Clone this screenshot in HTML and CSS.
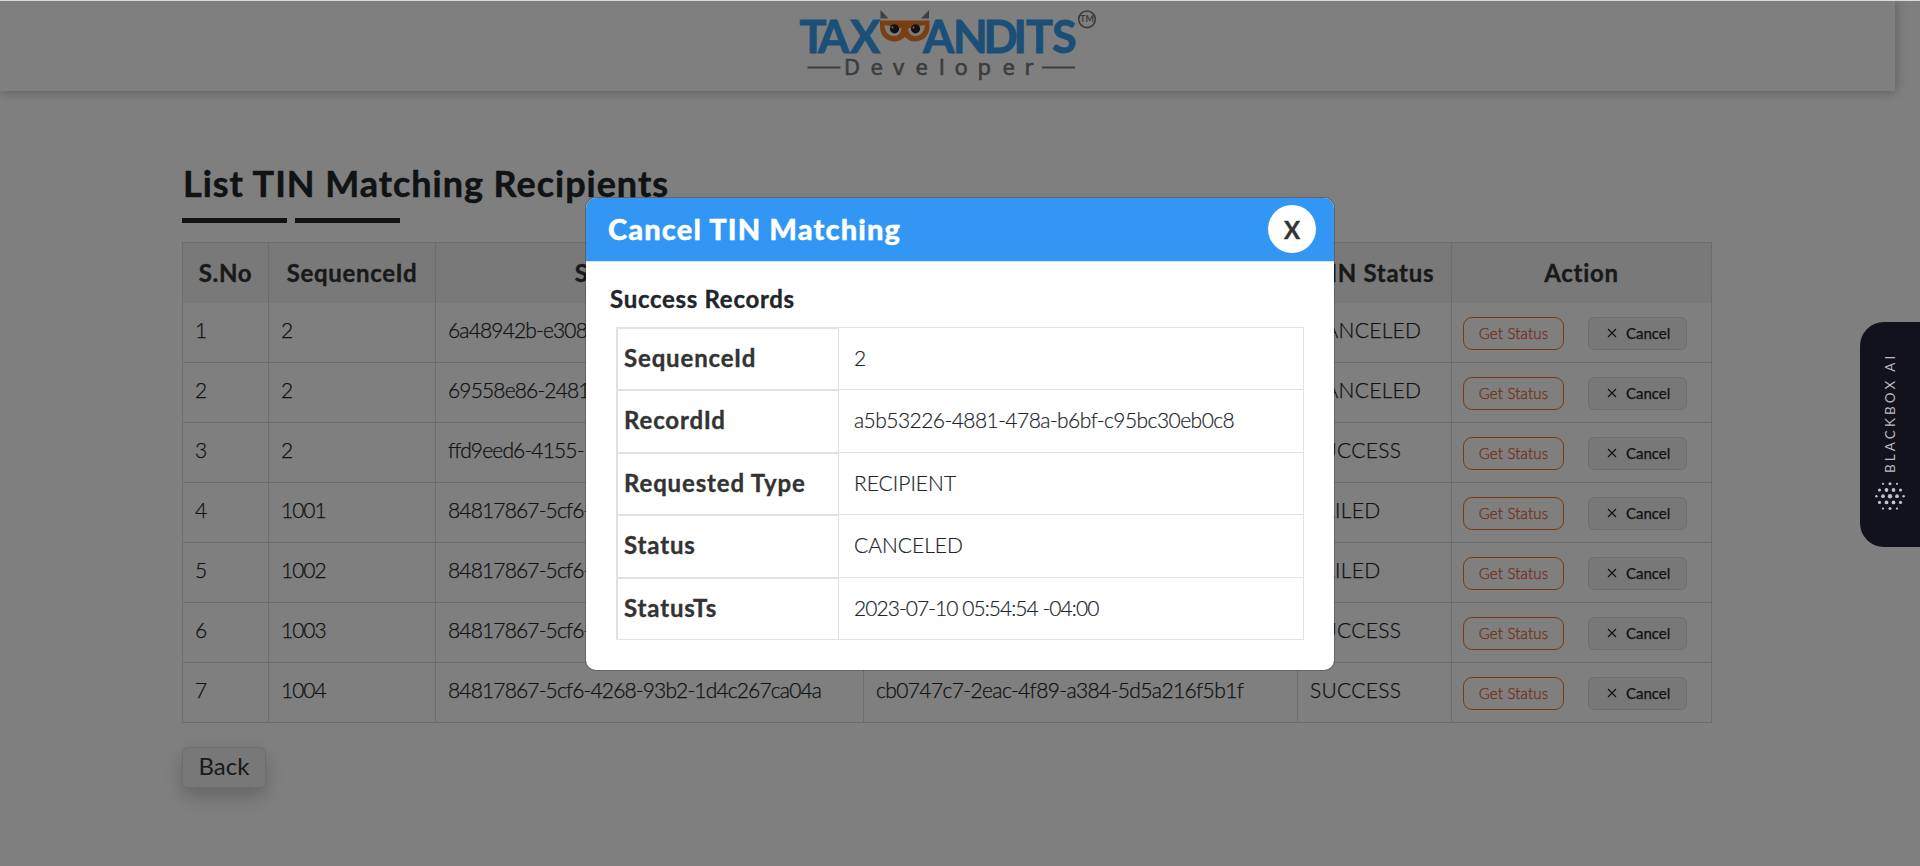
FILE: index.html
```
<!DOCTYPE html>
<html lang="en">
<head>
<meta charset="utf-8">
<title>List TIN Matching Recipients</title>
<link rel="stylesheet" href="styles.css">
</head>
<body>
<header class="topbar">
  <svg class="logo" width="310" height="80" viewBox="795 4 310 80" role="img" aria-label="TaxBandits Developer">
    <g class="logo-word">
      <text y="53" x="799.5 818 850">TAX</text>
      <text y="53" x="923 953 983.5 1013.5 1026 1052">ANDITS</text>
    </g>
    <path fill="#7c8082" d="M880.500 10L888.500 18.500H880.500zM929 10V18.500H921z"/>
    <path fill="#f77c26" d="M880 20.500H929.500V27C929.500 36 922.500 41.500 915 41.500C911 41.500 907.500 39.700 904.800 37C902 39.700 898.500 41.500 894.500 41.500C887 41.500 880 36 880 27z"/>
    <path fill="#f4f6f8" d="M884.500 25L901.500 28.500C901 33.500 898.200 36 894 36C888.500 36 884.500 31.500 884.500 25zM924.800 25L908 28.500C908.500 33.500 911.200 36 915.500 36C921 36 924.800 31.500 924.800 25z"/>
    <circle cx="894.500" cy="28.800" r="4.600" fill="#222"/><circle cx="915.500" cy="28.800" r="4.600" fill="#222"/>
    <circle cx="892.500" cy="27.500" r="1" fill="#ddd"/><circle cx="913.500" cy="27.500" r="1" fill="#ddd"/>
    <circle cx="1087" cy="19.300" r="8.300" fill="none" stroke="#777" stroke-width="1.600"/>
    <text class="logo-tm" x="1087" y="22.400">TM</text>
    <path stroke="#777c7c" stroke-width="2" d="M807.500 67.500H840.500M1042 67.500H1075"/>
    <text class="logo-sub" y="75" x="844 870.500 893 915.500 939 954.500 977.500 1002.500 1024.500">Developer</text>
  </svg>
</header>

<main class="page">
  <h1 class="title">List TIN Matching Recipients</h1>
  <div class="rule"><span></span><span></span></div>
  <div class="grid" id="grid">
    <div class="th">S.No</div><div class="th">SequenceId</div><div class="th">SubmissionId</div><div class="th">RecordId</div><div class="th">TIN Status</div><div class="th">Action</div>
  </div>
  <button class="back">Back</button>
</main>

<div class="backdrop"></div>
<div class="edge"></div>

<section class="modal">
  <div class="modal-head">
    <h2>Cancel TIN Matching</h2>
    <button class="close">X</button>
  </div>
  <div class="modal-body">
    <h3>Success Records</h3>
    <dl class="details">
      <dt>SequenceId</dt><dd>2</dd>
      <dt>RecordId</dt><dd class="uuid">a5b53226-4881-478a-b6bf-c95bc30eb0c8</dd>
      <dt>Requested Type</dt><dd>RECIPIENT</dd>
      <dt>Status</dt><dd>CANCELED</dd>
      <dt>StatusTs</dt><dd class="stamp">2023-07-10 05:54:54 -04:00</dd>
    </dl>
  </div>
</section>

<aside class="blackbox">
  <span>BLACKBOX AI</span>
  <svg width="32" height="30" viewBox="0 0 32 30" fill="#c2c2c6">
    <g><circle cx="9" cy="2.800" r="1.100"/><circle cx="16" cy="2.800" r="1.500"/><circle cx="23" cy="2.800" r="1.100"/>
    <circle cx="5.500" cy="9" r="1.600"/><circle cx="12.500" cy="9" r="1.900"/><circle cx="19.500" cy="9" r="1.900"/><circle cx="26.500" cy="9" r="1.600"/>
    <circle cx="2.400" cy="15.200" r="1.200"/><circle cx="9" cy="15.200" r="1.900"/><circle cx="16" cy="15.200" r="2.200"/><circle cx="23" cy="15.200" r="1.900"/><circle cx="29.600" cy="15.200" r="1.200"/>
    <circle cx="5.500" cy="21.400" r="1.600"/><circle cx="12.500" cy="21.400" r="1.900"/><circle cx="19.500" cy="21.400" r="1.900"/><circle cx="26.500" cy="21.400" r="1.600"/>
    <circle cx="9" cy="27.600" r="1.100"/><circle cx="16" cy="27.600" r="1.500"/><circle cx="23" cy="27.600" r="1.100"/></g>
  </svg>
</aside>
<script src="rows.js"></script>
</body>
</html>
```
FILE: styles.css
```
* { box-sizing: border-box; }
body {
  margin: 0;
  height: 866px;
  overflow: hidden;
  background: #fff;
  color: #212529;
  font-family: Lato, "Liberation Sans", sans-serif;
}
h1, h2, h3, dl, dd { margin: 0; }
button { font-family: inherit; padding: 0; }

.topbar {
  width: 1895px;
  height: 91px;
  padding: 4px 0 0 795px;
  background: #fff;
  box-shadow: 0 0 12px rgba(0, 0, 0, .32);
}
.logo { display: block; }
.logo-word { font: 700 45px Lato, sans-serif; fill: #369fee; stroke: #369fee; stroke-width: .9; }
.logo-sub { font: 400 22px "Noto Sans", sans-serif; fill: #777c7c; stroke: #777c7c; stroke-width: .6; }
.logo-tm { font: 700 9px Lato, sans-serif; fill: #777; text-anchor: middle; }

.page { padding: 70px 0 0 182px; }
.title {
  height: 45px;
  padding-left: 1px;
  font-size: 36px;
  line-height: 45px;
  font-weight: 700;
  letter-spacing: .97px;
  white-space: nowrap;
  -webkit-text-stroke: .5px;
}
.rule { display: flex; gap: 8px; margin-top: 12px; }
.rule span { width: 105px; height: 5px; background: #212529; }

.grid {
  display: grid;
  grid-template-columns: 86px 167px 428px 434px 154px 260px;
  width: 1530px;
  margin-top: 19px;
  border: solid #d8dadc;
  border-width: 1px 0 0 1px;
}
.th {
  height: 60px;
  line-height: 59px;
  border-right: 1px solid #d8dadc;
  background: #f3f3f3;
  color: #333;
  font-size: 24px;
  font-weight: 700;
  letter-spacing: .7px;
  text-align: center;
  -webkit-text-stroke: .35px;
}
.td {
  height: 60px;
  padding-left: 12px;
  border: solid #d8dadc;
  border-width: 0 1px 1px 0;
  font-size: 21px;
  font-weight: 300;
  line-height: 54px;
  white-space: nowrap;
  overflow: hidden;
  -webkit-text-stroke: .25px;
}
.num { letter-spacing: -1px; }
.uuid { letter-spacing: -.85px; }
.rec { letter-spacing: -.62px; }
.state { letter-spacing: .3px; }
.actions { display: flex; align-items: flex-start; gap: 24px; padding: 14px 0 0 11px; }
.status-btn, .cancel-btn {
  height: 33px;
  background: #fff;
  font-size: 15px;
}
.status-btn {
  width: 101px;
  padding-bottom: 2px;
  border: 1px solid #f37421;
  border-radius: 9px;
  color: #e86a38;
  font-weight: 300;
  letter-spacing: .2px;
  -webkit-text-stroke: .35px;
}
.cancel-btn {
  display: flex;
  align-items: center;
  gap: 9px;
  width: 99px;
  padding: 0 0 2px 18px;
  border: 1px solid #dcdcdc;
  border-radius: 6px;
  background: #f0f0f0;
  color: #212529;
}
.back {
  width: 84px;
  height: 41px;
  margin-top: 24px;
  padding-bottom: 4px;
  border: 1px solid #dcdcdc;
  border-radius: 6px;
  background: #f0f0f0;
  box-shadow: 0 8px 20px rgba(0, 0, 0, .22);
  color: #333;
  font-size: 24px;
}

.backdrop { position: absolute; inset: 0; background: rgba(0, 0, 0, .5); }
.edge { position: absolute; inset: 0 0 auto; height: 1px; background: #dadddc; }

.modal {
  position: absolute;
  left: 586px;
  top: 198px;
  width: 748px;
  height: 472px;
  border-radius: 10px;
  background: #fff;
  box-shadow: 0 0 0 1px rgba(0, 0, 0, .2);
}
.modal-head {
  display: flex;
  justify-content: space-between;
  height: 64px;
  padding: 7px 18px 0 22px;
  border-bottom: 1px solid #dee2e6;
  border-radius: 10px 10px 0 0;
  background: #3297f4;
}
.modal-head h2 {
  color: #fff;
  font-size: 29px;
  line-height: 47px;
  font-weight: 900;
  letter-spacing: 1.15px;
  -webkit-text-stroke: .4px;
}
.close {
  width: 48px;
  height: 48px;
  border: 0;
  border-radius: 50%;
  background: #fff;
  color: #333;
  font-size: 24px;
  font-weight: 700;
  -webkit-text-stroke: .4px;
}
.modal-body { padding: 20px 30px 0 25px; }
.modal-body h3 {
  height: 40px;
  margin-left: -1px;
  font-size: 24px;
  line-height: 33px;
  font-weight: 700;
  letter-spacing: .7px;
  -webkit-text-stroke: .35px;
}
.details {
  display: grid;
  grid-template-columns: 223px 465px;
  grid-template-rows: 62px 63px 62px 63px 62px;
  margin: 5px 0 0 5px;
  border-bottom: 1px solid #dee2e6;
}
.details dt {
  padding-left: 6px;
  border: solid #dee2e6;
  border-width: 2px 1px 0 2px;
  color: #333;
  font-size: 24px;
  line-height: 58px;
  font-weight: 700;
  letter-spacing: .85px;
  -webkit-text-stroke: .35px;
}
.details dd {
  padding-left: 15px;
  border: solid #dee2e6;
  border-width: 1px 1px 0 0;
  font-size: 21px;
  line-height: 59px;
  font-weight: 300;
  -webkit-text-stroke: .2px;
}
.details .uuid { letter-spacing: -.55px; }
.details .stamp { letter-spacing: -.95px; }

.blackbox {
  position: absolute;
  left: 1860px;
  top: 322px;
  display: flex;
  flex-direction: column;
  align-items: center;
  width: 60px;
  height: 225px;
  padding-top: 30px;
  border-radius: 24px 0 0 24px;
  background: #12121c;
}
.blackbox span {
  height: 121px;
  color: #bcbcc0;
  font-size: 13.5px;
  line-height: 16px;
  letter-spacing: 3.1px;
  white-space: nowrap;
  writing-mode: vertical-rl;
  transform: rotate(180deg);
}
.blackbox svg { margin-top: 8px; }
```
FILE: rows.js
```
const same = "84817867-5cf6-4268-93b2-1d4c267ca04a";
const rows = [
  ["2", "6a48942b-e308-", "", "CANCELED"],
  ["2", "69558e86-2481-", "", "CANCELED"],
  ["2", "ffd9eed6-4155-", "", "SUCCESS"],
  ["1001", same, "", "FAILED"],
  ["1002", same, "", "FAILED"],
  ["1003", same, "", "SUCCESS"],
  ["1004", same, "cb0747c7-2eac-4f89-a384-5d5a216f5b1f", "SUCCESS"]
];
const cross = '<svg width="10" height="10" viewBox="0 0 10 10"><path d="M1 1L9 9M9 1L1 9" stroke="#212529" stroke-width="1.200"/></svg>';
document.getElementById("grid").insertAdjacentHTML("beforeend", rows.map((r, i) =>
  `<div class="td num">${i + 1}</div><div class="td num">${r[0]}</div><div class="td uuid">${r[1]}</div><div class="td rec">${r[2]}</div><div class="td state">${r[3]}</div>
  <div class="td actions"><button class="status-btn">Get Status</button><button class="cancel-btn">${cross}Cancel</button></div>`).join(""));
```
